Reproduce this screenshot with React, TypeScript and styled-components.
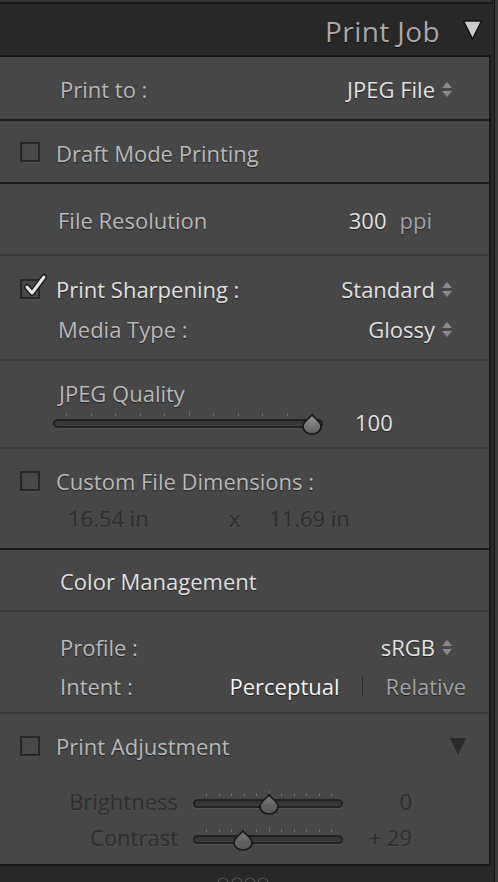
import { createGlobalStyle, styled } from 'styled-components'

const GlobalStyle = createGlobalStyle`
  html, body {
    margin: 0;
    padding: 0;
    background: #282828;
  }
  body {
    font-family: "Open Sans", Lato, sans-serif;
    -webkit-font-smoothing: antialiased;
  }
`

const Frame = styled.div`
  display: flex;
  width: 498px;
  height: 882px;
  overflow: hidden;
  background: #282828;
`

const Main = styled.div`
  width: 494px;
  display: flex;
  flex-direction: column;
`

const Gutter = styled.div`
  width: 3px;
  border-left: 1px solid #151515;
  background: #3a3a3a;
`

const TopStub = styled.div`
  height: 2px;
  width: 492px;
  background: #343434;
  border-bottom: 2px solid #171717;
  border-right: 1px solid #171717;
`

const Header = styled.div`
  height: 54px;
  display: flex;
  align-items: center;
  justify-content: flex-end;
  gap: 22px;
  padding-right: 11px;
`

const HeaderTitle = styled.span`
  font-size: 28px;
  letter-spacing: 0.4px;
  color: #a9a9a9;
  text-shadow: 0 1px 1px rgba(0, 0, 0, 0.6);
  padding-top: 4px;
`

const Panel = styled.div`
  width: 491px;
  box-sizing: border-box;
  background: #474747;
  border-top: 2px solid #171717;
  border-right: 2px solid #181818;
  border-bottom: 2px solid #181818;
`

const Section = styled.div<{ $h: number; $line?: 'dark' | 'light' | 'none'; $pt?: number; $center?: boolean }>`
  box-sizing: border-box;
  height: ${p => p.$h}px;
  padding-top: ${p => p.$pt ?? 0}px;
  display: flex;
  flex-direction: column;
  justify-content: ${p => (p.$center ? 'center' : 'flex-start')};
  border-bottom: ${p =>
    p.$line === 'none' ? 'none' : `2px solid ${p.$line === 'light' ? '#3b3b3b' : '#1c1c1c'}`};
`

const Row = styled.div<{ $h?: number; $pl?: number; $pr?: number }>`
  display: flex;
  align-items: center;
  height: ${p => p.$h ?? 32}px;
  padding-left: ${p => p.$pl ?? 60}px;
  padding-right: ${p => p.$pr ?? 37}px;
`

const Label = styled.span<{ $tone?: 'dim' | 'bright' | 'off' }>`
  flex: 1;
  font-size: 22px;
  padding-top: 2px;
  white-space: nowrap;
  color: ${p => (p.$tone === 'bright' ? '#e0e0e0' : p.$tone === 'off' ? '#2d2d2d' : '#b9b9b9')};
  text-shadow: ${p =>
    p.$tone === 'off' ? '0 1px 0 rgba(255,255,255,0.06)' : '0 1px 1px rgba(0,0,0,0.55)'};
`

const Value = styled.span<{ $tone?: 'bright' | 'white' | 'dim' | 'off' }>`
  font-size: 22px;
  padding-top: 2px;
  white-space: nowrap;
  color: ${p =>
    p.$tone === 'white'
      ? '#f4f4f4'
      : p.$tone === 'dim'
      ? '#a2a2a2'
      : p.$tone === 'off'
      ? '#2d2d2d'
      : '#e2e2e2'};
  text-shadow: ${p =>
    p.$tone === 'off' ? '0 1px 0 rgba(255,255,255,0.06)' : '0 1px 1px rgba(0,0,0,0.55)'};
`

const Stepper = styled.span`
  display: flex;
  flex-direction: column;
  gap: 3px;
  margin-left: 7px;
  padding-top: 3px;
`

const Arrow = styled.span<{ $down?: boolean }>`
  width: 0;
  height: 0;
  border-left: 5px solid transparent;
  border-right: 5px solid transparent;
  ${p => (p.$down ? 'border-top' : 'border-bottom')}: 6px solid #8a8a8a;
`

const Box = styled.span`
  position: relative;
  width: 16px;
  height: 16px;
  border: 2px solid #262626;
  background: #484848;
  box-shadow: 0 1px 0 rgba(255, 255, 255, 0.05);
  margin: 1px 16px 0 0;
  flex-shrink: 0;
`

const Tick = styled.svg`
  position: absolute;
  left: 2px;
  top: -9px;
`

const CheckRow = styled(Row)`
  padding-left: 20px;
`

const Unit = styled.span`
  margin-left: 13px;
  display: flex;
`

const SliderBox = styled.div<{ $w: number }>`
  position: relative;
  width: ${p => p.$w}px;
  height: 22px;
  flex-shrink: 0;
`

const Ticks = styled.div`
  display: flex;
  justify-content: space-between;
  align-items: flex-end;
  height: 5px;
  padding: 0 11px 0 13px;
  margin-bottom: 3px;
`

const TickMark = styled.span<{ $mid?: boolean }>`
  width: 1px;
  height: ${p => (p.$mid ? 5 : 3)}px;
  background: #6e6e6e;
`

const Track = styled.div`
  box-sizing: border-box;
  height: 9px;
  border: 2px solid #222;
  border-radius: 5px;
  background: linear-gradient(#333, #3e3e3e);
  box-shadow: 0 1px 0 rgba(255, 255, 255, 0.06);
`

const Thumb = styled.svg`
  position: absolute;
  top: 2px;
`

const SliderRow = styled.div`
  display: flex;
  align-items: center;
  padding-left: 53px;
  margin-top: 3px;
`

const SliderValue = styled(Value)`
  margin-left: 32px;
  line-height: 22px;
  padding-top: 1px;
`

const Dims = styled.div`
  display: grid;
  grid-template-columns: 161px 40px auto;
  padding-left: 68px;
  margin-top: 5px;
  height: 32px;
  align-items: center;
`

const Divider = styled.span`
  width: 1px;
  height: 21px;
  background: #2a2a2a;
  margin: 3px 23px 0 22px;
`

const Collapse = styled.span`
  width: 0;
  height: 0;
  border-left: 8px solid transparent;
  border-right: 8px solid transparent;
  border-top: 17px solid #2b2b2b;
  margin-top: 2px;
`

const HeaderTri = styled.svg`
  margin-top: 2px;
`

const AdjGrid = styled.div`
  display: grid;
  grid-template-columns: 178px 165px 69px;
  grid-auto-rows: 36px;
  align-items: center;
  margin-top: 22px;
`

const AdjLabel = styled(Value)`
  text-align: right;
  padding-top: 0;
`

const AdjSlider = styled.div`
  justify-self: end;
  padding-top: 2px;
`

const AdjValue = styled(Value)`
  text-align: right;
  padding-top: 0;
`

const Footer = styled.div`
  flex: 1;
  display: flex;
  justify-content: center;
  padding-top: 8px;
`

function Checkbox({ checked }: { checked?: boolean }) {
  return (
    <Box>
      {checked && (
        <Tick width="24" height="26" viewBox="0 0 24 26">
          <path d="M3 15 L8 21 L20 5" fill="none" stroke="#1e1e1e" strokeWidth="6" strokeLinecap="round" strokeLinejoin="round" />
          <path d="M3 15 L8 21 L20 5" fill="none" stroke="#e6e6e6" strokeWidth="3" strokeLinecap="round" strokeLinejoin="round" />
        </Tick>
      )}
    </Box>
  )
}

function Select({ children }: { children: string }) {
  return (
    <>
      <Value>{children}</Value>
      <Stepper>
        <Arrow />
        <Arrow $down />
      </Stepper>
    </>
  )
}

function Slider({ width, pos, dim }: { width: number; pos: number; dim?: boolean }) {
  const ticks = Array.from({ length: 11 }, (_, i) => i)
  return (
    <SliderBox $w={width}>
      <Ticks>
        {ticks.map(i => (
          <TickMark key={i} $mid={i === 5} />
        ))}
      </Ticks>
      <Track />
      <Thumb width="22" height="22" viewBox="0 0 22 22" style={{ left: pos - 11 }}>
        <defs>
          <linearGradient id={dim ? 'thd' : 'thb'} x1="0" y1="0" x2="0" y2="1">
            <stop offset="0" stopColor={dim ? '#777' : '#9a9a9a'} />
            <stop offset="1" stopColor={dim ? '#555' : '#5e5e5e'} />
          </linearGradient>
        </defs>
        <path
          d="M11 1.5 C12.5 5 20 8.5 20 13.5 A9 7.5 0 0 1 2 13.5 C2 8.5 9.5 5 11 1.5 Z"
          fill={`url(#${dim ? 'thd' : 'thb'})`}
          stroke="#161616"
          strokeWidth="1.6"
        />
        {dim && <path d="M4 13 H18" stroke="#5c5c5c" strokeWidth="1" />}
      </Thumb>
    </SliderBox>
  )
}

export default function App() {
  return (
    <>
      <GlobalStyle />
      <Frame>
        <Main>
          <TopStub />
          <Header>
            <HeaderTitle>Print Job</HeaderTitle>
            <HeaderTri width="21" height="22" viewBox="0 0 21 22">
              <path d="M1.5 2 H19.5 L10.5 20 Z" fill="#cbcbcb" stroke="#141414" strokeWidth="1.6" strokeLinejoin="round" />
            </HeaderTri>
          </Header>
          <Panel>
            <Section $h={64} $center>
              <Row>
                <Label>Print to :</Label>
                <Select>JPEG File</Select>
              </Row>
            </Section>

            <Section $h={63} $center>
              <CheckRow>
                <Checkbox />
                <Label>Draft Mode Printing</Label>
              </CheckRow>
            </Section>

            <Section $h={72} $line="light" $center>
              <Row $pl={58} $pr={57}>
                <Label>File Resolution</Label>
                <Value $tone="bright">300</Value>
                <Unit>
                  <Value $tone="dim">ppi</Value>
                </Unit>
              </Row>
            </Section>

            <Section $h={105} $line="light" $pt={12}>
              <CheckRow $h={40}>
                <Checkbox checked />
                <Label $tone="bright">Print Sharpening :</Label>
                <Select>Standard</Select>
              </CheckRow>
              <Row $h={40} $pl={58}>
                <Label>Media Type :</Label>
                <Select>Glossy</Select>
              </Row>
            </Section>

            <Section $h={88} $line="light" $pt={16}>
              <Row $h={30} $pl={59}>
                <Label>JPEG Quality</Label>
              </Row>
              <SliderRow>
                <Slider width={270} pos={259} />
                <SliderValue>100</SliderValue>
              </SliderRow>
            </Section>

            <Section $h={101} $pt={15}>
              <CheckRow>
                <Checkbox />
                <Label>Custom File Dimensions :</Label>
              </CheckRow>
              <Dims>
                <Value $tone="off">16.54 in</Value>
                <Value $tone="off">x</Value>
                <Value $tone="off">11.69 in</Value>
              </Dims>
            </Section>

            <Section $h={62} $line="light" $center>
              <Row>
                <Label $tone="bright">Color Management</Label>
              </Row>
            </Section>

            <Section $h={102} $line="light" $pt={14}>
              <Row $h={39}>
                <Label>Profile :</Label>
                <Select>sRGB</Select>
              </Row>
              <Row $h={39} $pr={23}>
                <Label>Intent :</Label>
                <Value $tone="white">Perceptual</Value>
                <Divider />
                <Value $tone="dim">Relative</Value>
              </Row>
            </Section>

            <Section $h={150} $line="none" $pt={15}>
              <CheckRow $pr={23}>
                <Checkbox />
                <Label>Print Adjustment</Label>
                <Collapse />
              </CheckRow>
              <AdjGrid>
                <AdjLabel $tone="off">Brightness</AdjLabel>
                <AdjSlider>
                  <Slider width={150} pos={76} dim />
                </AdjSlider>
                <AdjValue $tone="off">0</AdjValue>
                <AdjLabel $tone="off">Contrast</AdjLabel>
                <AdjSlider>
                  <Slider width={150} pos={50} dim />
                </AdjSlider>
                <AdjValue $tone="off">+ 29</AdjValue>
              </AdjGrid>
            </Section>
          </Panel>
          <Footer>
            <svg width="60" height="8" viewBox="0 0 60 8">
              {[6, 20, 33, 46].map(cx => (
                <circle key={cx} cx={cx} cy="9" r="5" fill="none" stroke="#555" strokeWidth="1.2" />
              ))}
            </svg>
          </Footer>
        </Main>
        <Gutter />
      </Frame>
    </>
  )
}
